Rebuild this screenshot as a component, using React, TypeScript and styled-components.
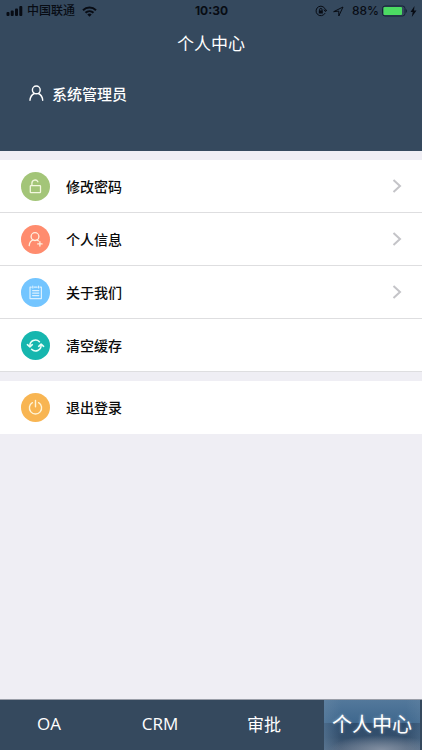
import React from "react";
import styled, { createGlobalStyle } from "styled-components";

const GlobalStyle = createGlobalStyle`
  * { box-sizing: border-box; }
  body { margin: 0; background: #efeff4; }
  button { border: 0; padding: 0; background: none; font: inherit; color: inherit; cursor: pointer; }
`;

const Page = styled.div`
  min-height: 100vh;
  display: flex;
  flex-direction: column;
  background: #efeef4;
  color: #0b0b0b;
  font-family: "Open Sans", "Noto Sans CJK SC", sans-serif;
`;

const Header = styled.header`
  height: 151px;
  flex: none;
  background: #35495e;
  color: #fff;
`;

const StatusBar = styled.div`
  height: 22px;
  padding: 0 5px 0 6px;
  display: grid;
  grid-template-columns: 1fr auto 1fr;
  align-items: center;
  color: #080c14;
  font-family: Inter, "Noto Sans CJK SC", sans-serif;
  font-size: 12px;
  line-height: 22px;
`;

const StatusGroup = styled.div<{ $end?: boolean }>`
  display: flex;
  align-items: center;
  gap: ${(p) => (p.$end ? 3 : 4)}px;
  justify-content: ${(p) => (p.$end ? "flex-end" : "flex-start")};
`;

const Carrier = styled.span`
  font-weight: 500;
  margin-right: 3px;
`;

const Clock = styled.time`
  font-weight: 700;
`;

const Level = styled.span`
  font-weight: 500;
  margin-left: 4px;
`;

const Title = styled.h1`
  margin: 0;
  height: 44px;
  line-height: 44px;
  text-align: center;
  font-size: 17px;
  font-weight: 400;
`;

const Profile = styled.div`
  display: flex;
  align-items: center;
  gap: 8px;
  height: 54px;
  padding-left: 28px;
  font-size: 15px;
  font-weight: 500;
`;

const Group = styled.ul`
  list-style: none;
  margin: 9px 0 0;
  padding: 0;
  background: #fff;
  flex: none;
`;

const Item = styled.li`
  border-bottom: 1px solid #dedee0;

  &:only-child {
    border-bottom-color: #fff;
  }
`;

const RowButton = styled.button`
  width: 100%;
  height: 52px;
  padding: 0 20px 0 21px;
  display: flex;
  align-items: center;
  gap: 16px;
  text-align: left;
`;

const Disc = styled.span<{ $color: string }>`
  width: 29px;
  height: 29px;
  border-radius: 50%;
  display: flex;
  align-items: center;
  justify-content: center;
  background: ${(p) => p.$color};
`;

const Label = styled.span`
  flex: 1;
  font-size: 14px;
  font-weight: 500;
`;

const TabBar = styled.nav`
  margin-top: auto;
  height: 51px;
  flex: none;
  padding-right: 2px;
  display: grid;
  grid-template-columns: 98fr 124fr 84fr 114fr;
  background: #35495e;
  border-top: 1px solid #9a9ea8;
  color: #fff;
`;

const Tab = styled.button<{ $active?: boolean }>`
  height: 50px;
  padding-bottom: 4px;
  white-space: nowrap;
  font-size: ${(p) => (p.$active ? 20 : 17)}px;
  ${(p) =>
    p.$active &&
    `
    margin-left: 18px;
    text-shadow: 0 0 3px #ffffff66;
    background:
      radial-gradient(ellipse 55% 30% at 60% 100%, #8390a2 0%, #8390a200 100%),
      linear-gradient(90deg, #6686a488 0%, #6686a400 18%, #6686a400 85%, #6686a455 100%),
      linear-gradient(#53789b 0%, #3f688e 45%, #2d4c6d 46%, #344f6c 75%, #4b6079 100%);
  `}
`;

const line = {
  fill: "none",
  stroke: "currentColor",
  strokeLinecap: "round",
  strokeLinejoin: "round",
} as const;

const SignalIcon = () => (
  <svg width="17" height="10" viewBox="0 0 17 10" fill="currentColor" aria-hidden="true">
    <rect x="0.5" y="6" width="3" height="4" rx="1" />
    <rect x="4.7" y="4.5" width="3" height="5.5" rx="1" />
    <rect x="9" y="2.5" width="3" height="7.5" rx="1" />
    <rect x="13.3" y="0" width="3" height="10" rx="1" />
  </svg>
);

const WifiIcon = () => (
  <svg width="15" height="11" viewBox="0 0 15 11" aria-hidden="true">
    <g fill="none" stroke="currentColor" strokeWidth="2">
      <path d="M1 4.3C4.7.7 10.3.7 14 4.3" />
      <path d="M3.5 6.8C5.8 4.6 9.2 4.6 11.5 6.8" />
    </g>
    <path d="M5.3 8.5Q7.5 6.7 9.7 8.5L7.5 10.7Z" fill="currentColor" />
  </svg>
);

const RotationLockIcon = () => (
  <svg width="12" height="12" viewBox="0 0 12 12" {...line} aria-hidden="true">
    <path d="M10 8.4A4.8 4.8 0 1 1 10.6 5.2M9 5.1l1.6 1.5 1.2-1.7" />
    <rect x="3.8" y="5.5" width="4" height="3" fill="currentColor" stroke="none" />
    <path d="M4.6 5.5V4.6a1.2 1.2 0 0 1 2.4 0v.9" />
  </svg>
);

const LocationIcon = () => (
  <svg width="15" height="11" viewBox="-3 0 15 11" {...line} aria-hidden="true">
    <path d="M1 5.5 10 1 5.8 10V5.5Z" />
  </svg>
);

const BatteryIcon = () => (
  <svg width="25" height="12" viewBox="0 0 25 12" aria-hidden="true">
    <rect x="0.5" y="1" width="22.5" height="10" rx="2.5" fill="none" stroke="#142235" />
    <rect x="1.5" y="2" width="18.5" height="8" rx="1" fill="#4cdb63" />
    <path d="M23.8 4v4Q25 7.5 25 6T23.8 4Z" fill="#142235" />
  </svg>
);

const BoltIcon = () => (
  <svg width="7" height="11" viewBox="0 0 7 11" fill="currentColor" aria-hidden="true">
    <path d="M4.5 0 0.5 6h2.2L1.8 11 6.5 4.6H4Z" />
  </svg>
);

const UserIcon = () => (
  <svg width="16" height="16" viewBox="0 0 16 16" {...line} strokeWidth="1.4" aria-hidden="true">
    <circle cx="8.3" cy="4.9" r="3.9" />
    <path d="M2 15.2C2.3 11.9 4 9.6 6.2 8.5M10.5 8.5c2.2 1.1 3.9 3.4 4.2 6.7" />
  </svg>
);

const UnlockIcon = () => (
  <svg width="15" height="17" viewBox="0 0 15 17" {...line} stroke="#f3f8df" strokeWidth="1.3" aria-hidden="true">
    <rect x="2.3" y="7.6" width="10.2" height="7" rx="0.6" />
    <path d="M3.9 7.4V5.1a3.2 3.2 0 0 1 6-1.4" />
  </svg>
);

const UserPlusIcon = () => (
  <svg width="17" height="17" viewBox="0 0 17 17" {...line} stroke="#fff0df" strokeWidth="1.3" aria-hidden="true">
    <circle cx="8" cy="5.6" r="3.9" />
    <path d="M2.2 14.6c.3-2.9 1.6-4.9 3.8-5.7M10 8.9l1.3.9M12.9 10.7v4.4M10.7 12.9h4.4" />
  </svg>
);

const ClipboardIcon = () => (
  <svg width="15" height="15" viewBox="0 0 15 15" {...line} stroke="#d9f0ff" strokeWidth="1.2" aria-hidden="true">
    <path d="M3.2 2.2H2v11.4h11.4V2.2h-1.2M6.3 2.2h2.8" />
    <path d="M4.8 1.2v1.8M10.6 1.2v1.8M4.6 5.6h6.2M4.6 8.1h6.2M4.6 10.6h6.2" />
  </svg>
);

const RefreshIcon = () => (
  <svg width="19" height="17" viewBox="0 0 19 17" {...line} stroke="#ecfff8" strokeWidth="1.6" aria-hidden="true">
    <path d="M3.9 8.9a5.6 5.6 0 0 1 9.5-4.2M15.1 8.1a5.6 5.6 0 0 1-9.5 4.2" />
    <path d="M1.4 7.7 3.9 9.8 6.3 7.7M12.7 9.3l2.4-2.1 2.5 2.1" />
  </svg>
);

const PowerIcon = () => (
  <svg width="17" height="17" viewBox="0 0 17 17" {...line} stroke="#fff4d6" strokeWidth="1.4" aria-hidden="true">
    <path d="M5.4 3.7a6.1 6.1 0 1 0 6.2 0M8.5 1.5v6.2" />
  </svg>
);

const Chevron = () => (
  <svg width="10" height="14" viewBox="0 0 10 14" fill="none" stroke="#c4c4c8" strokeWidth="2" aria-hidden="true">
    <path d="M1.5 1 8 7 1.5 13" />
  </svg>
);

type Entry = { label: string; color: string; icon: React.ReactNode; link?: boolean };

const settings: Entry[] = [
  { label: "修改密码", color: "#a3c578", icon: <UnlockIcon />, link: true },
  { label: "个人信息", color: "#ff8c6e", icon: <UserPlusIcon />, link: true },
  { label: "关于我们", color: "#73c5ff", icon: <ClipboardIcon />, link: true },
  { label: "清空缓存", color: "#16b6ae", icon: <RefreshIcon /> },
];

const session: Entry[] = [{ label: "退出登录", color: "#f8b552", icon: <PowerIcon /> }];

const EntryList = ({ entries }: { entries: Entry[] }) => (
  <Group>
    {entries.map((e) => (
      <Item key={e.label}>
        <RowButton type="button">
          <Disc $color={e.color}>{e.icon}</Disc>
          <Label>{e.label}</Label>
          {e.link && <Chevron />}
        </RowButton>
      </Item>
    ))}
  </Group>
);

export default function App() {
  return (
    <Page lang="zh-CN">
      <GlobalStyle />
      <Header>
        <StatusBar>
          <StatusGroup>
            <SignalIcon />
            <Carrier>中国联通</Carrier>
            <WifiIcon />
          </StatusGroup>
          <Clock>10:30</Clock>
          <StatusGroup $end>
            <RotationLockIcon />
            <LocationIcon />
            <Level>88%</Level>
            <BatteryIcon />
            <BoltIcon />
          </StatusGroup>
        </StatusBar>
        <Title>个人中心</Title>
        <Profile>
          <UserIcon />
          <span>系统管理员</span>
        </Profile>
      </Header>
      <main>
        <EntryList entries={settings} />
        <EntryList entries={session} />
      </main>
      <TabBar>
        <Tab type="button">OA</Tab>
        <Tab type="button">CRM</Tab>
        <Tab type="button">审批</Tab>
        <Tab type="button" $active aria-current="page">
          个人中心
        </Tab>
      </TabBar>
    </Page>
  );
}
